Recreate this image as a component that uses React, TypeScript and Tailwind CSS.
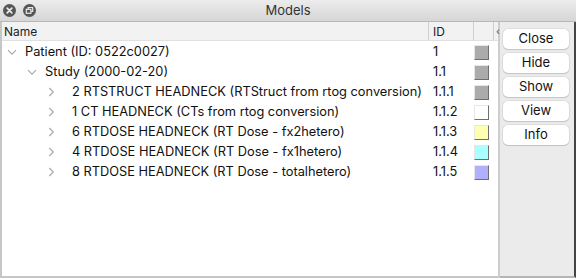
import React from "react";

const rows = [
  { depth: 0, open: true, label: "Patient (ID: 0522c0027)", id: "1", color: "#ababab" },
  { depth: 1, open: true, label: "Study (2000-02-20)", id: "1.1", color: "#ababab" },
  { depth: 2, open: false, label: "2 RTSTRUCT HEADNECK (RTStruct from rtog conversion)", id: "1.1.1", color: "#ababab" },
  { depth: 2, open: false, label: "1 CT HEADNECK (CTs from rtog conversion)", id: "1.1.2", color: "#ffffff" },
  { depth: 2, open: false, label: "6 RTDOSE HEADNECK (RT Dose - fx2hetero)", id: "1.1.3", color: "#ffffb0" },
  { depth: 2, open: false, label: "4 RTDOSE HEADNECK (RT Dose - fx1hetero)", id: "1.1.4", color: "#aaffff" },
  { depth: 2, open: false, label: "8 RTDOSE HEADNECK (RT Dose - totalhetero)", id: "1.1.5", color: "#b0b0ff" },
];

function Chevron({ open }: { open: boolean }) {
  return open ? (
    <svg width="10" height="10" viewBox="0 0 10 10" className="shrink-0">
      <path d="M1 3.2 L5 7.2 L9 3.2" fill="none" stroke="#a6a6a6" strokeWidth="1.1" />
    </svg>
  ) : (
    <svg width="10" height="10" viewBox="0 0 10 10" className="shrink-0">
      <path d="M3.3 1 L7.3 5 L3.3 9" fill="none" stroke="#a6a6a6" strokeWidth="1.1" />
    </svg>
  );
}

export default function App() {
  const indent = ["pl-[5px]", "pl-[25px]", "pl-[44px]"];
  const textPad = ["ml-[8px]", "ml-[8px]", "ml-[16px]"];
  return (
    <div
      className="w-[576px] h-[278px] flex flex-col bg-[#ececec] overflow-hidden text-[12.8px] text-[#111]"
      style={{ fontFamily: 'Inter, "Liberation Sans", Arial, sans-serif' }}
    >
      {/* Title bar */}
      <div className="h-[22px] shrink-0 relative flex items-center justify-center bg-gradient-to-b from-[#ececec] to-[#d6d6d6] border-b border-[#b8b8b8]">
        <div className="absolute left-[3px] top-[4px] flex gap-[7px]">
          <svg width="13" height="13" viewBox="0 0 13 13">
            <circle cx="6.5" cy="6.5" r="6.5" fill="#555" />
            <path d="M4.2 4.2 L8.8 8.8 M8.8 4.2 L4.2 8.8" stroke="#e8e8e8" strokeWidth="1.8" strokeLinecap="round" />
          </svg>
          <svg width="13" height="13" viewBox="0 0 13 13">
            <circle cx="6.5" cy="6.5" r="6.5" fill="#555" />
            <rect x="3.3" y="5.3" width="4.6" height="4" fill="none" stroke="#e8e8e8" strokeWidth="1.2" />
            <path d="M5.2 5.3 V3.5 H9.7 V7.5 H7.9" fill="none" stroke="#e8e8e8" strokeWidth="1.2" />
          </svg>
        </div>
        <span className="text-[13px] text-[#333] pt-[1px]">Models</span>
      </div>

      <div className="flex flex-1 min-h-0">
        {/* Tree */}
        <div className="w-[500px] flex flex-col bg-white border-l-[2px] border-b-[2px] border-[#c6c6c6] border-r-[2px] border-r-[#cdcdcd]">
          <div className="h-[19px] shrink-0 flex items-center bg-[#f2f2f2] border-b border-[#e0e0e0] text-[12px] text-[#222]">
            <div className="w-[426px] pl-[2px] pt-[2px]">Name</div>
            <div className="w-[45px] h-full border-l border-[#cfcfcf] pl-[4px] pt-[2px] flex items-center">ID</div>
            <div className="w-[20px] h-full border-l border-[#cfcfcf]"></div>
            <div className="w-[5px] h-full border-l border-[#cfcfcf] flex items-center text-[10px] pl-[2px] text-[#555]">‹</div>
          </div>
          <div className="pt-[1px]">
            {rows.map((r, i) => (
              <div key={i} className="h-[20px] flex items-center">
                <div className={`w-[426px] flex items-center whitespace-nowrap ${indent[r.depth]}`}>
                  <Chevron open={r.open} />
                  <span className={textPad[r.depth]}>{r.label}</span>
                </div>
                <div className="w-[45px] pl-[5px]">{r.id}</div>
                <div className="w-[20px] flex items-center pl-[1px]">
                  <div
                    className="w-[15px] h-[15px] border-r border-b border-[#6e6e6e] border-t border-l border-t-[#e6e6e6] border-l-[#e6e6e6]"
                    style={{ backgroundColor: r.color }}
                  />
                </div>
              </div>
            ))}
          </div>
        </div>

        {/* Buttons */}
        <div className="flex-1 flex flex-col gap-[4px] pt-[7px] pl-[3px] pr-[5px] bg-[#ebebeb] border-b-[2px] border-[#b5b5b5] border-r-[2px] border-r-[#444]">
          {["Close", "Hide", "Show", "View", "Info"].map((b) => (
            <div
              key={b}
              className="h-[20px] w-[66px] shrink-0 bg-white rounded-[5px] flex items-center justify-center text-[13px] text-[#111] shadow-[0_0_0_0.5px_rgba(0,0,0,0.12),0_1px_1px_rgba(0,0,0,0.12)]"
            >
              {b}
            </div>
          ))}
        </div>
      </div>
    </div>
  );
}
